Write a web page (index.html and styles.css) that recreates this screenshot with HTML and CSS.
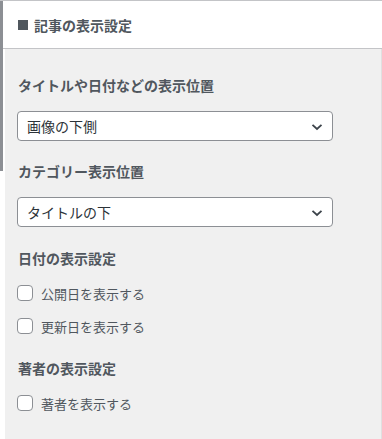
FILE: index.html
```html
<!DOCTYPE html>
<html lang="ja">
<head>
<meta charset="utf-8">
<link rel="stylesheet" href="styles.css">
</head>
<body>
<div class="frame">
  <div class="edge"><div class="edge-bar"></div></div>
  <div class="panel">
    <div class="header"><span class="sq"></span><span class="header-title">記事の表示設定</span></div>
    <div class="content">
      <div class="title t1">タイトルや日付などの表示位置</div>
      <div class="select"><span>画像の下側</span>
        <svg class="chev" width="12" height="8" viewBox="0 0 12 8"><path d="M1.5 1.8 L6 6 L10.5 1.8" fill="none" stroke="#3c434a" stroke-width="1.8"/></svg>
      </div>
      <div class="title t2">カテゴリー表示位置</div>
      <div class="select"><span>タイトルの下</span>
        <svg class="chev" width="12" height="8" viewBox="0 0 12 8"><path d="M1.5 1.8 L6 6 L10.5 1.8" fill="none" stroke="#3c434a" stroke-width="1.8"/></svg>
      </div>
      <div class="title t3">日付の表示設定</div>
      <div class="row r1"><span class="cb"></span><span class="lbl">公開日を表示する</span></div>
      <div class="row r2"><span class="cb"></span><span class="lbl">更新日を表示する</span></div>
      <div class="title t4">著者の表示設定</div>
      <div class="row r3"><span class="cb"></span><span class="lbl">著者を表示する</span></div>
    </div>
  </div>
</div>
</body>
</html>
```
FILE: styles.css
```css
html, body { margin: 0; padding: 0; }
body {
  background: #fff;
  font-family: "Noto Sans CJK JP", "Noto Sans", sans-serif;
  width: 382px;
  height: 439px;
  overflow: hidden;
}
.frame {
  display: flex;
  border-top: 1px solid #c3c4c7;
  height: 438px;
}
.edge {
  width: 5px;
  flex: none;
  background: #fff;
}
.edge-bar {
  width: 3px;
  height: 170px;
  background: #8c8f94;
}
.panel {
  flex: 1;
  display: flex;
  flex-direction: column;
}
.header {
  height: 47px;
  border-bottom: 1px solid #c3c4c7;
  background: #fff;
  display: flex;
  align-items: center;
  margin-left: -2px;
  padding-left: 15px;
}
.sq {
  width: 10px;
  height: 10px;
  background: #50575e;
  margin-right: 6px;
  margin-top: 1px;
}
.header-title {
  font-size: 14px;
  font-weight: bold;
  color: #50575e;
  line-height: 20px;
}
.content {
  flex: 1;
  background: #f0f0f0;
  padding: 26px 0 0 12px;
  border-right: 1px solid #e0e0e0;
}
.title {
  font-size: 14px;
  font-weight: bold;
  color: #50575e;
  line-height: 20px;
  padding-left: 1px;
}
.t2 { margin-top: 20px; }
.t3 { margin-top: 21px; }
.t4 { margin-top: 20px; }
.select {
  margin-top: 16px;
  height: 28px;
  border: 1px solid #8c8f94;
  border-radius: 4px;
  background: #fff;
  display: flex;
  align-items: center;
  justify-content: space-between;
  padding: 0 9px 0 9px;
  box-sizing: content-box;
  width: 296px;
  font-size: 14px;
  color: #2c3338;
}
.chev { margin-top: 1px; }
.row {
  display: flex;
  align-items: center;
  height: 24px;
}
.r1 { margin-top: 13px; }
.r2 { margin-top: 9px; }
.r3 { margin-top: 13px; }
.cb {
  width: 14px;
  height: 14px;
  border: 1px solid #8c8f94;
  border-radius: 4px;
  background: #fff;
  margin-right: 8px;
}
.lbl {
  font-size: 13px;
  color: #50575e;
}
```
